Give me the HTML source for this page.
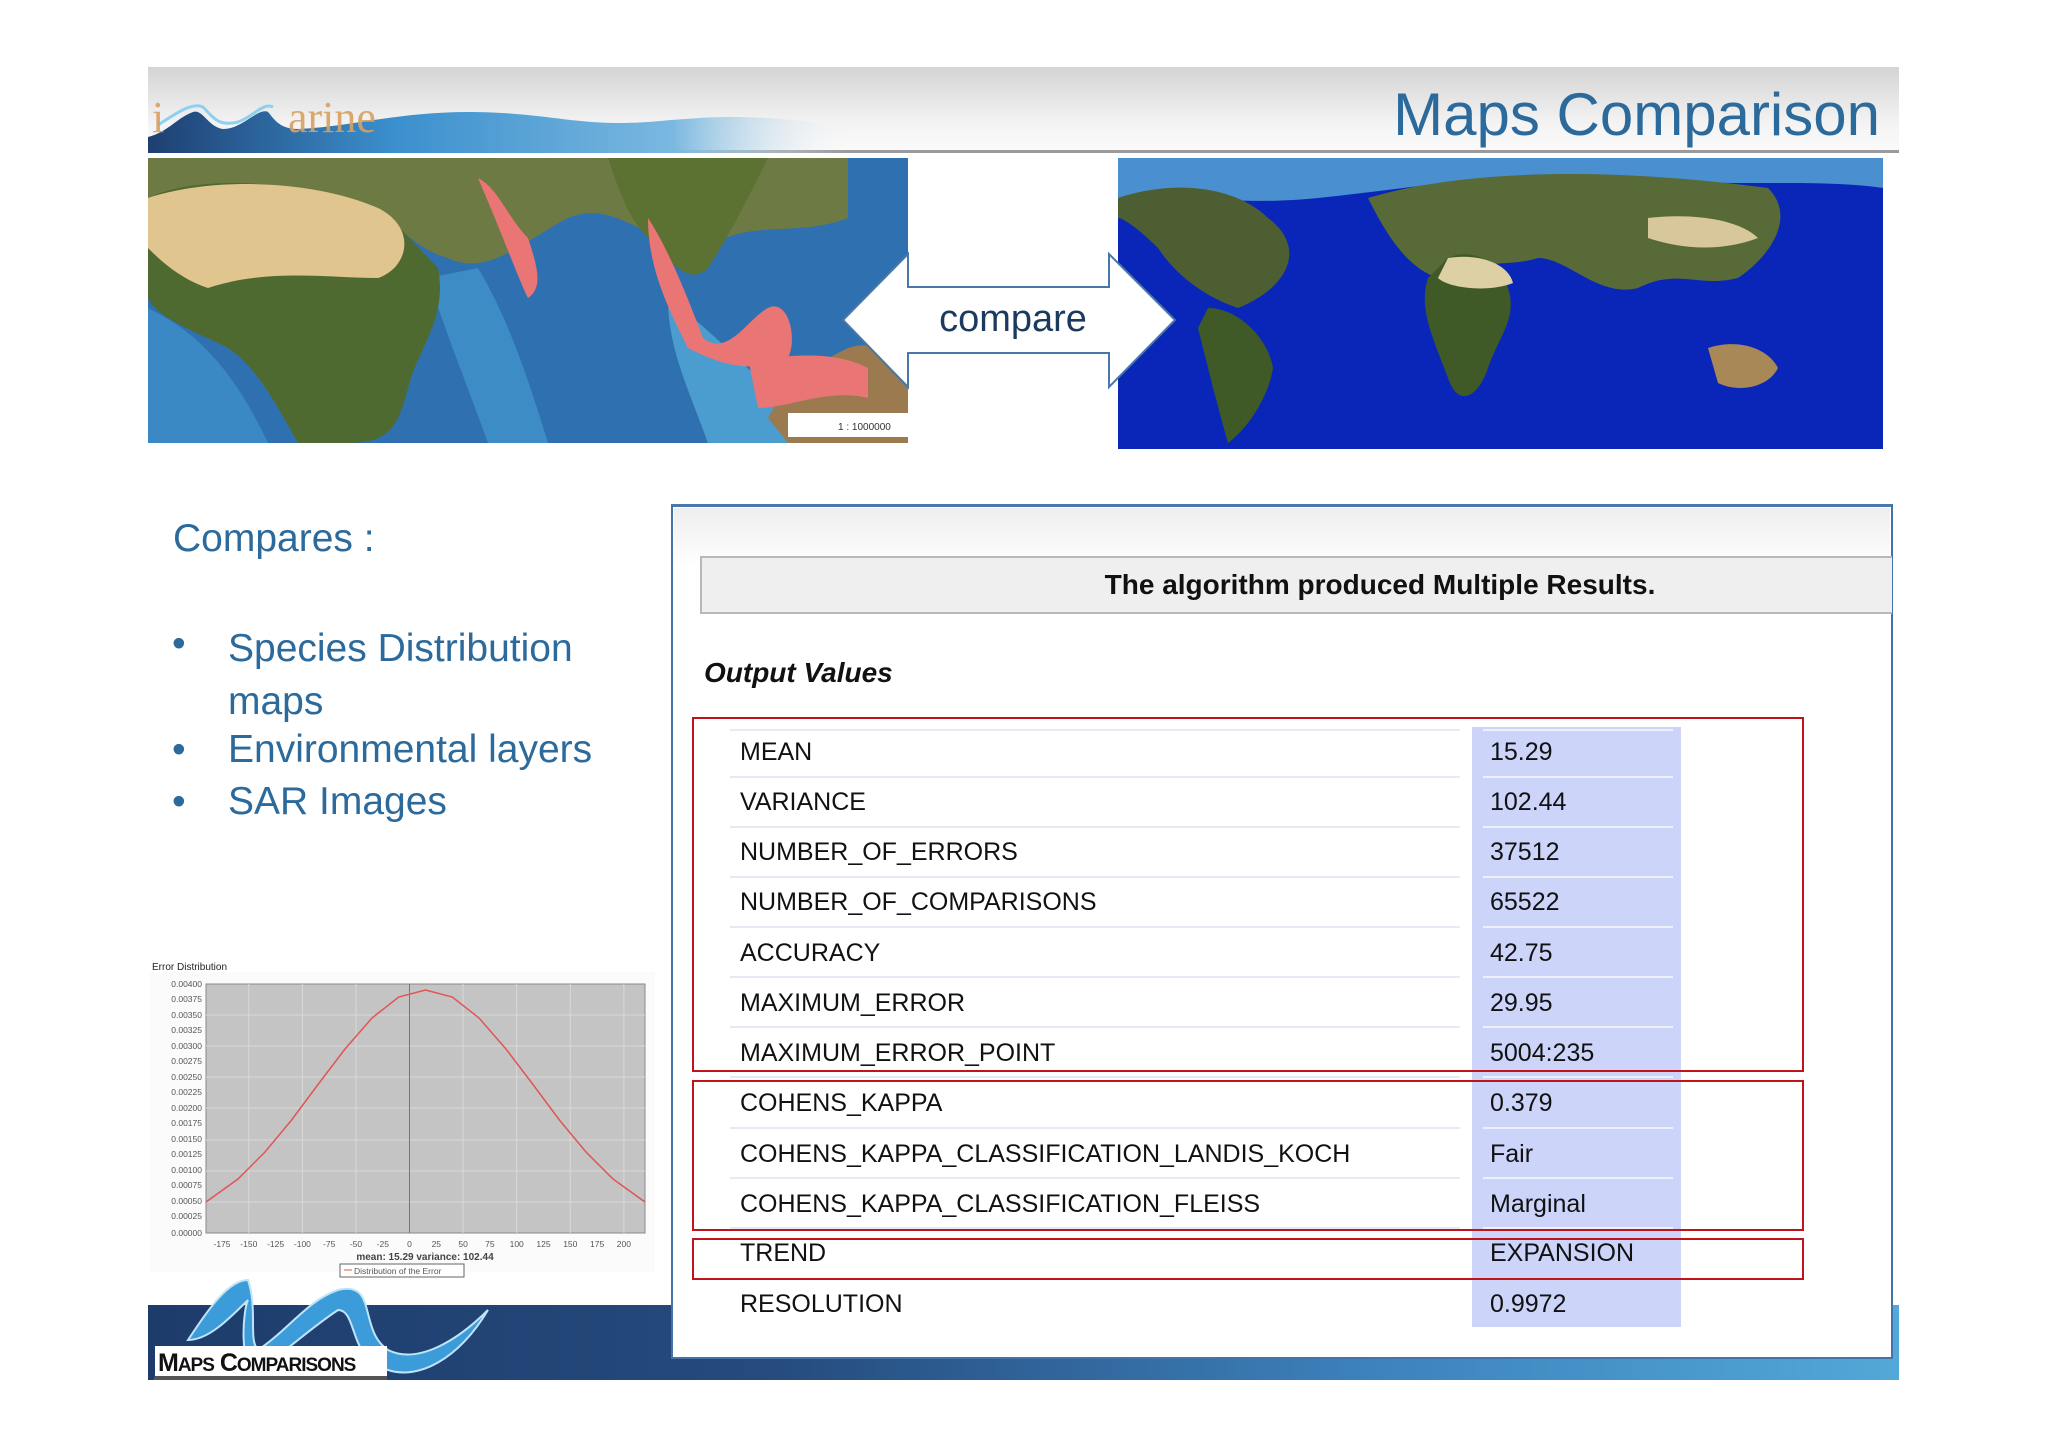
<!DOCTYPE html>
<html><head><meta charset="utf-8"><style>
*{margin:0;padding:0;box-sizing:border-box}
body{width:2048px;height:1447px;background:#fff;position:relative;overflow:hidden;font-family:"Liberation Sans",sans-serif}
.a{position:absolute}
.blue{color:#2c6a9c}
.row{position:absolute;left:740px;font-size:25px;color:#111;white-space:nowrap}
.val{position:absolute;left:1490px;font-size:25px;color:#111;white-space:nowrap}
.sepL{position:absolute;left:730px;width:730px;height:2px;background:#e6eaf4}
.sepR{position:absolute;left:1483px;width:190px;height:2px;background:#eef0fb}
.red{position:absolute;border:2px solid #c0141c}
</style></head><body>

<!-- header band -->
<div class="a" style="left:148px;top:67px;width:1751px;height:86px;background:linear-gradient(#d4d4d4,#f4f4f4 70%,#fafafa);border-bottom:3px solid #9a9a9a"></div>
<svg class="a" style="left:148px;top:67px" width="700" height="86">
<defs><linearGradient id="wg" x1="0" x2="1"><stop offset="0" stop-color="#1e3f72"/><stop offset="0.35" stop-color="#3b8fcd"/><stop offset="0.75" stop-color="#7ab8e0"/><stop offset="1" stop-color="#f0f0f0" stop-opacity="0"/></linearGradient></defs>
<path d="M0 70 C20 65 30 50 45 45 C55 42 60 60 75 62 C95 62 110 40 120 45 C125 50 130 62 150 62 C200 60 250 45 320 45 C400 45 430 60 500 55 C560 50 600 45 700 60 L700 86 L0 86Z" fill="url(#wg)"/>
<path d="M10 58 C30 45 45 35 55 40 C65 50 70 60 90 55 C105 50 115 35 125 40" fill="none" stroke="#8fd0f0" stroke-width="3"/>
<text x="4" y="65" font-family="Liberation Serif,serif" font-size="44" fill="#d7a162" opacity="0.9">i</text>
<text x="140" y="65" font-family="Liberation Serif,serif" font-size="44" fill="#d7a162" opacity="0.9">arine</text>
</svg>
<div class="a blue" style="left:1380px;top:80px;width:500px;text-align:right;font-size:60px;line-height:70px">Maps Comparison</div>

<!-- left map -->
<svg class="a" style="left:148px;top:158px" width="760" height="285">
<rect width="760" height="285" fill="#2f70b0"/>
<path d="M0 150 C40 170 80 200 120 285 H0Z" fill="#3a88c4"/>
<path d="M280 120 C300 180 320 230 340 285 H400 C380 220 360 160 330 110Z" fill="#3d8cc6"/>
<path d="M520 140 C560 170 600 210 640 250 L700 285 H560 C540 230 520 190 520 140Z" fill="#4b9dd0"/>
<path d="M0 0 H700 V60 C650 80 600 60 560 90 C500 90 470 40 420 60 C380 80 340 120 300 100 C260 90 240 50 200 40 C140 30 60 40 0 60Z" fill="#6e7a44"/>
<path d="M0 40 C40 20 120 20 200 40 C240 50 260 80 290 110 C300 160 270 190 260 230 C250 270 240 285 200 285 L150 285 C130 250 110 210 80 190 C40 170 10 160 0 140Z" fill="#4f6a30"/>
<path d="M0 40 C60 20 160 20 230 50 C270 70 260 110 230 120 C180 120 120 110 60 130 C30 120 10 100 0 90Z" fill="#e0c58f"/>
<path d="M460 0 H620 C600 40 580 80 560 110 C540 130 520 100 500 80 C480 60 470 30 460 0Z" fill="#5c7233"/>
<path d="M500 60 C520 90 540 140 555 180 C580 200 600 160 620 150 C640 140 650 180 640 200 C600 220 560 200 540 190 C520 150 500 110 500 60Z" fill="#e97575"/>
<path d="M330 20 C350 30 360 60 380 80 C390 110 395 130 380 140 C370 120 360 90 330 20Z" fill="#e97575"/>
<path d="M620 260 C640 220 680 200 700 190 C730 180 760 200 760 210 V285 H640Z" fill="#9b7a4f"/>
<path d="M600 200 C640 200 680 190 720 210 L720 240 C680 230 640 250 610 250Z" fill="#e97575"/>
<rect x="640" y="255" width="120" height="24" fill="#fff"/>
<text x="690" y="272" font-size="10" fill="#333">1 : 1000000</text>
</svg>

<!-- right map -->
<svg class="a" style="left:1118px;top:158px" width="765" height="291">
<rect width="765" height="291" fill="#0a26b8"/>
<path d="M0 0 H765 V30 C700 20 600 30 500 20 C400 10 300 30 200 40 C100 50 50 30 0 40Z" fill="#4a8fd0"/>
<path d="M0 40 C60 20 120 30 150 60 C190 90 170 130 120 150 C90 140 60 120 40 90 C20 70 5 60 0 60Z" fill="#4d5f32"/>
<path d="M90 150 C120 150 150 180 155 210 C150 240 130 270 110 285 C100 250 90 210 80 170Z" fill="#3f5a26"/>
<path d="M250 40 C350 10 500 10 650 30 C680 60 650 100 620 120 C580 130 560 110 520 130 C480 140 450 100 420 100 C390 110 350 100 320 120 C290 110 270 80 250 40Z" fill="#586a38"/>
<path d="M330 100 C350 90 380 100 390 130 C400 160 380 180 370 210 C360 240 340 250 330 220 C315 180 300 150 310 120Z" fill="#3f5a26"/>
<path d="M330 100 C360 95 390 105 395 125 C370 135 330 130 320 120Z" fill="#ddd0a4"/>
<path d="M530 60 C570 55 620 60 640 80 C600 95 560 90 530 80Z" fill="#d8c79a"/>
<path d="M590 190 C620 180 650 190 660 210 C650 230 620 235 600 225Z" fill="#a88856"/>
</svg>

<!-- arrow -->
<svg class="a" style="left:840px;top:250px" width="340" height="142">
<path d="M3 70 L68 4 V37 H269 V4 L335 70 L269 137 V103 H68 V137 Z" fill="#fff" stroke="#4a76a8" stroke-width="2"/>
</svg>
<div class="a" style="left:878px;top:298px;width:270px;text-align:center;font-size:38px;color:#1b3a5e">compare</div>

<!-- left text -->
<div class="a blue" style="left:173px;top:517px;font-size:39px">Compares :</div>
<div class="a blue" style="left:172px;top:622px;font-size:39px">•</div>
<div class="a blue" style="left:228px;top:622px;font-size:39px;line-height:53px">Species Distribution<br>maps</div>
<div class="a blue" style="left:172px;top:728px;font-size:39px">•</div>
<div class="a blue" style="left:228px;top:728px;font-size:39px">Environmental layers</div>
<div class="a blue" style="left:172px;top:780px;font-size:39px">•</div>
<div class="a blue" style="left:228px;top:780px;font-size:39px">SAR Images</div>

<!-- bottom band -->
<div class="a" style="left:148px;top:1305px;width:1751px;height:75px;background:linear-gradient(90deg,#1d3c6c,#254a7c 35%,#3d82bc 70%,#52a8d8)"></div>
<svg class="a" style="left:148px;top:1270px" width="370" height="115">
<path d="M40 70 C60 40 80 10 100 10 C110 40 100 70 110 80 C140 60 160 30 190 20 C230 10 210 60 240 80 C270 95 310 70 340 40 C310 90 270 110 240 100 C200 90 210 40 190 40 C160 60 140 80 110 100 C90 100 95 40 100 30 C80 50 60 70 40 70Z" fill="#3c9cda" stroke="#bfe4f8" stroke-width="2"/>
</svg>
<div class="a" style="left:153px;top:1346px;width:234px;height:34px;background:#fff;border-bottom:4px solid #555;border-left:2px solid #1d3c6c"></div>
<div class="a" style="left:158px;top:1349px;font-size:25px;font-weight:bold;color:#111;white-space:nowrap;letter-spacing:-1px">M<span style="font-size:19px">APS</span> C<span style="font-size:19px">OMPARISONS</span></div>

<!-- chart -->
<div class="a" style="left:152px;top:962px;font-size:10px;color:#222">Error Distribution</div>
<svg class="a" style="left:150px;top:960px" width="510" height="330">
<rect x="0" y="12" width="505" height="300" fill="#fbfbfb"/>
<rect x="56" y="24" width="439" height="249" fill="#c4c4c4" stroke="#888"/>
<g stroke="#d8d8d8" stroke-width="1">
<line x1="56" y1="55" x2="495" y2="55"/><line x1="56" y1="86" x2="495" y2="86"/><line x1="56" y1="117" x2="495" y2="117"/><line x1="56" y1="148" x2="495" y2="148"/><line x1="56" y1="180" x2="495" y2="180"/><line x1="56" y1="211" x2="495" y2="211"/><line x1="56" y1="242" x2="495" y2="242"/>
<line x1="98.8" y1="24" x2="98.8" y2="273"/><line x1="152.4" y1="24" x2="152.4" y2="273"/><line x1="206" y1="24" x2="206" y2="273"/><line x1="313" y1="24" x2="313" y2="273"/><line x1="366.7" y1="24" x2="366.7" y2="273"/><line x1="420.3" y1="24" x2="420.3" y2="273"/><line x1="473.9" y1="24" x2="473.9" y2="273"/>
</g>
<line x1="259.5" y1="24" x2="259.5" y2="273" stroke="#777"/>
<polyline fill="none" stroke="#e05555" stroke-width="1.5" points="56,242 88,219 115,192 141.6,160 168.4,124 195,89 222,58 248.7,37 275.5,30 302.3,37 329,58 356,89 382.6,124 409.4,160 436,192 463,219 495,242"/>
<g font-size="8.5" fill="#555" text-anchor="end">
<text x="52" y="27">0.00400</text><text x="52" y="42">0.00375</text><text x="52" y="58">0.00350</text><text x="52" y="73">0.00325</text><text x="52" y="89">0.00300</text><text x="52" y="104">0.00275</text><text x="52" y="120">0.00250</text><text x="52" y="135">0.00225</text><text x="52" y="151">0.00200</text><text x="52" y="166">0.00175</text><text x="52" y="182">0.00150</text><text x="52" y="197">0.00125</text><text x="52" y="213">0.00100</text><text x="52" y="228">0.00075</text><text x="52" y="244">0.00050</text><text x="52" y="259">0.00025</text><text x="52" y="276">0.00000</text>
</g>
<g font-size="8.5" fill="#555" text-anchor="middle">
<text x="72" y="287">-175</text><text x="98.8" y="287">-150</text><text x="125.6" y="287">-125</text><text x="152.4" y="287">-100</text><text x="179.2" y="287">-75</text><text x="206" y="287">-50</text><text x="232.8" y="287">-25</text><text x="259.5" y="287">0</text><text x="286.3" y="287">25</text><text x="313.1" y="287">50</text><text x="339.9" y="287">75</text><text x="366.7" y="287">100</text><text x="393.5" y="287">125</text><text x="420.3" y="287">150</text><text x="447.1" y="287">175</text><text x="473.9" y="287">200</text>
</g>
<text x="275" y="300" font-size="10" font-weight="bold" fill="#444" text-anchor="middle">mean: 15.29 variance: 102.44</text>
<rect x="190" y="304" width="124" height="13" fill="#fff" stroke="#666"/>
<line x1="194" y1="310" x2="202" y2="310" stroke="#e05555"/>
<text x="204" y="314" font-size="8.5" fill="#555">Distribution of the Error</text>
</svg>

<!-- panel -->
<div class="a" style="left:671px;top:504px;width:1222px;height:855px;background:#fff;border:2px solid #4673a6;border-top:3px solid #4a78ac"></div>
<div class="a" style="left:674px;top:508px;width:1216px;height:60px;background:linear-gradient(#eeeeee,#fff)"></div>
<div class="a" style="left:700px;top:556px;width:1192px;height:58px;background:#efefef;border:2px solid #b8b8b8;border-right:none"></div>
<div class="a" style="left:1000px;top:569px;width:760px;text-align:center;font-size:28px;font-weight:bold;color:#111">The algorithm produced Multiple Results.</div>
<div class="a" style="left:704px;top:657px;font-size:28px;font-weight:bold;font-style:italic;color:#111">Output Values</div>

<div class="a" style="left:1472px;top:727px;width:209px;height:600px;background:#ccd4fa"></div>

<div class="sepL" style="top:729px"></div><div class="sepR" style="top:729px"></div>
<div class="sepL" style="top:776px"></div><div class="sepR" style="top:776px"></div>
<div class="sepL" style="top:826px"></div><div class="sepR" style="top:826px"></div>
<div class="sepL" style="top:876px"></div><div class="sepR" style="top:876px"></div>
<div class="sepL" style="top:926px"></div><div class="sepR" style="top:926px"></div>
<div class="sepL" style="top:976px"></div><div class="sepR" style="top:976px"></div>
<div class="sepL" style="top:1026px"></div><div class="sepR" style="top:1026px"></div>
<div class="sepL" style="top:1076px"></div><div class="sepR" style="top:1076px"></div>
<div class="sepL" style="top:1127px"></div><div class="sepR" style="top:1127px"></div>
<div class="sepL" style="top:1177px"></div><div class="sepR" style="top:1177px"></div>
<div class="sepL" style="top:1227px"></div><div class="sepR" style="top:1227px"></div>

<div class="row" style="top:738px">MEAN</div><div class="val" style="top:738px">15.29</div>
<div class="row" style="top:788px">VARIANCE</div><div class="val" style="top:788px">102.44</div>
<div class="row" style="top:838px">NUMBER_OF_ERRORS</div><div class="val" style="top:838px">37512</div>
<div class="row" style="top:888px">NUMBER_OF_COMPARISONS</div><div class="val" style="top:888px">65522</div>
<div class="row" style="top:939px">ACCURACY</div><div class="val" style="top:939px">42.75</div>
<div class="row" style="top:989px">MAXIMUM_ERROR</div><div class="val" style="top:989px">29.95</div>
<div class="row" style="top:1039px">MAXIMUM_ERROR_POINT</div><div class="val" style="top:1039px">5004:235</div>
<div class="row" style="top:1089px">COHENS_KAPPA</div><div class="val" style="top:1089px">0.379</div>
<div class="row" style="top:1140px">COHENS_KAPPA_CLASSIFICATION_LANDIS_KOCH</div><div class="val" style="top:1140px">Fair</div>
<div class="row" style="top:1190px">COHENS_KAPPA_CLASSIFICATION_FLEISS</div><div class="val" style="top:1190px">Marginal</div>
<div class="row" style="top:1239px">TREND</div><div class="val" style="top:1239px">EXPANSION</div>
<div class="row" style="top:1290px">RESOLUTION</div><div class="val" style="top:1290px">0.9972</div>

<div class="red" style="left:692px;top:717px;width:1112px;height:355px"></div>
<div class="red" style="left:692px;top:1080px;width:1112px;height:151px"></div>
<div class="red" style="left:692px;top:1238px;width:1112px;height:42px"></div>

</body></html>
